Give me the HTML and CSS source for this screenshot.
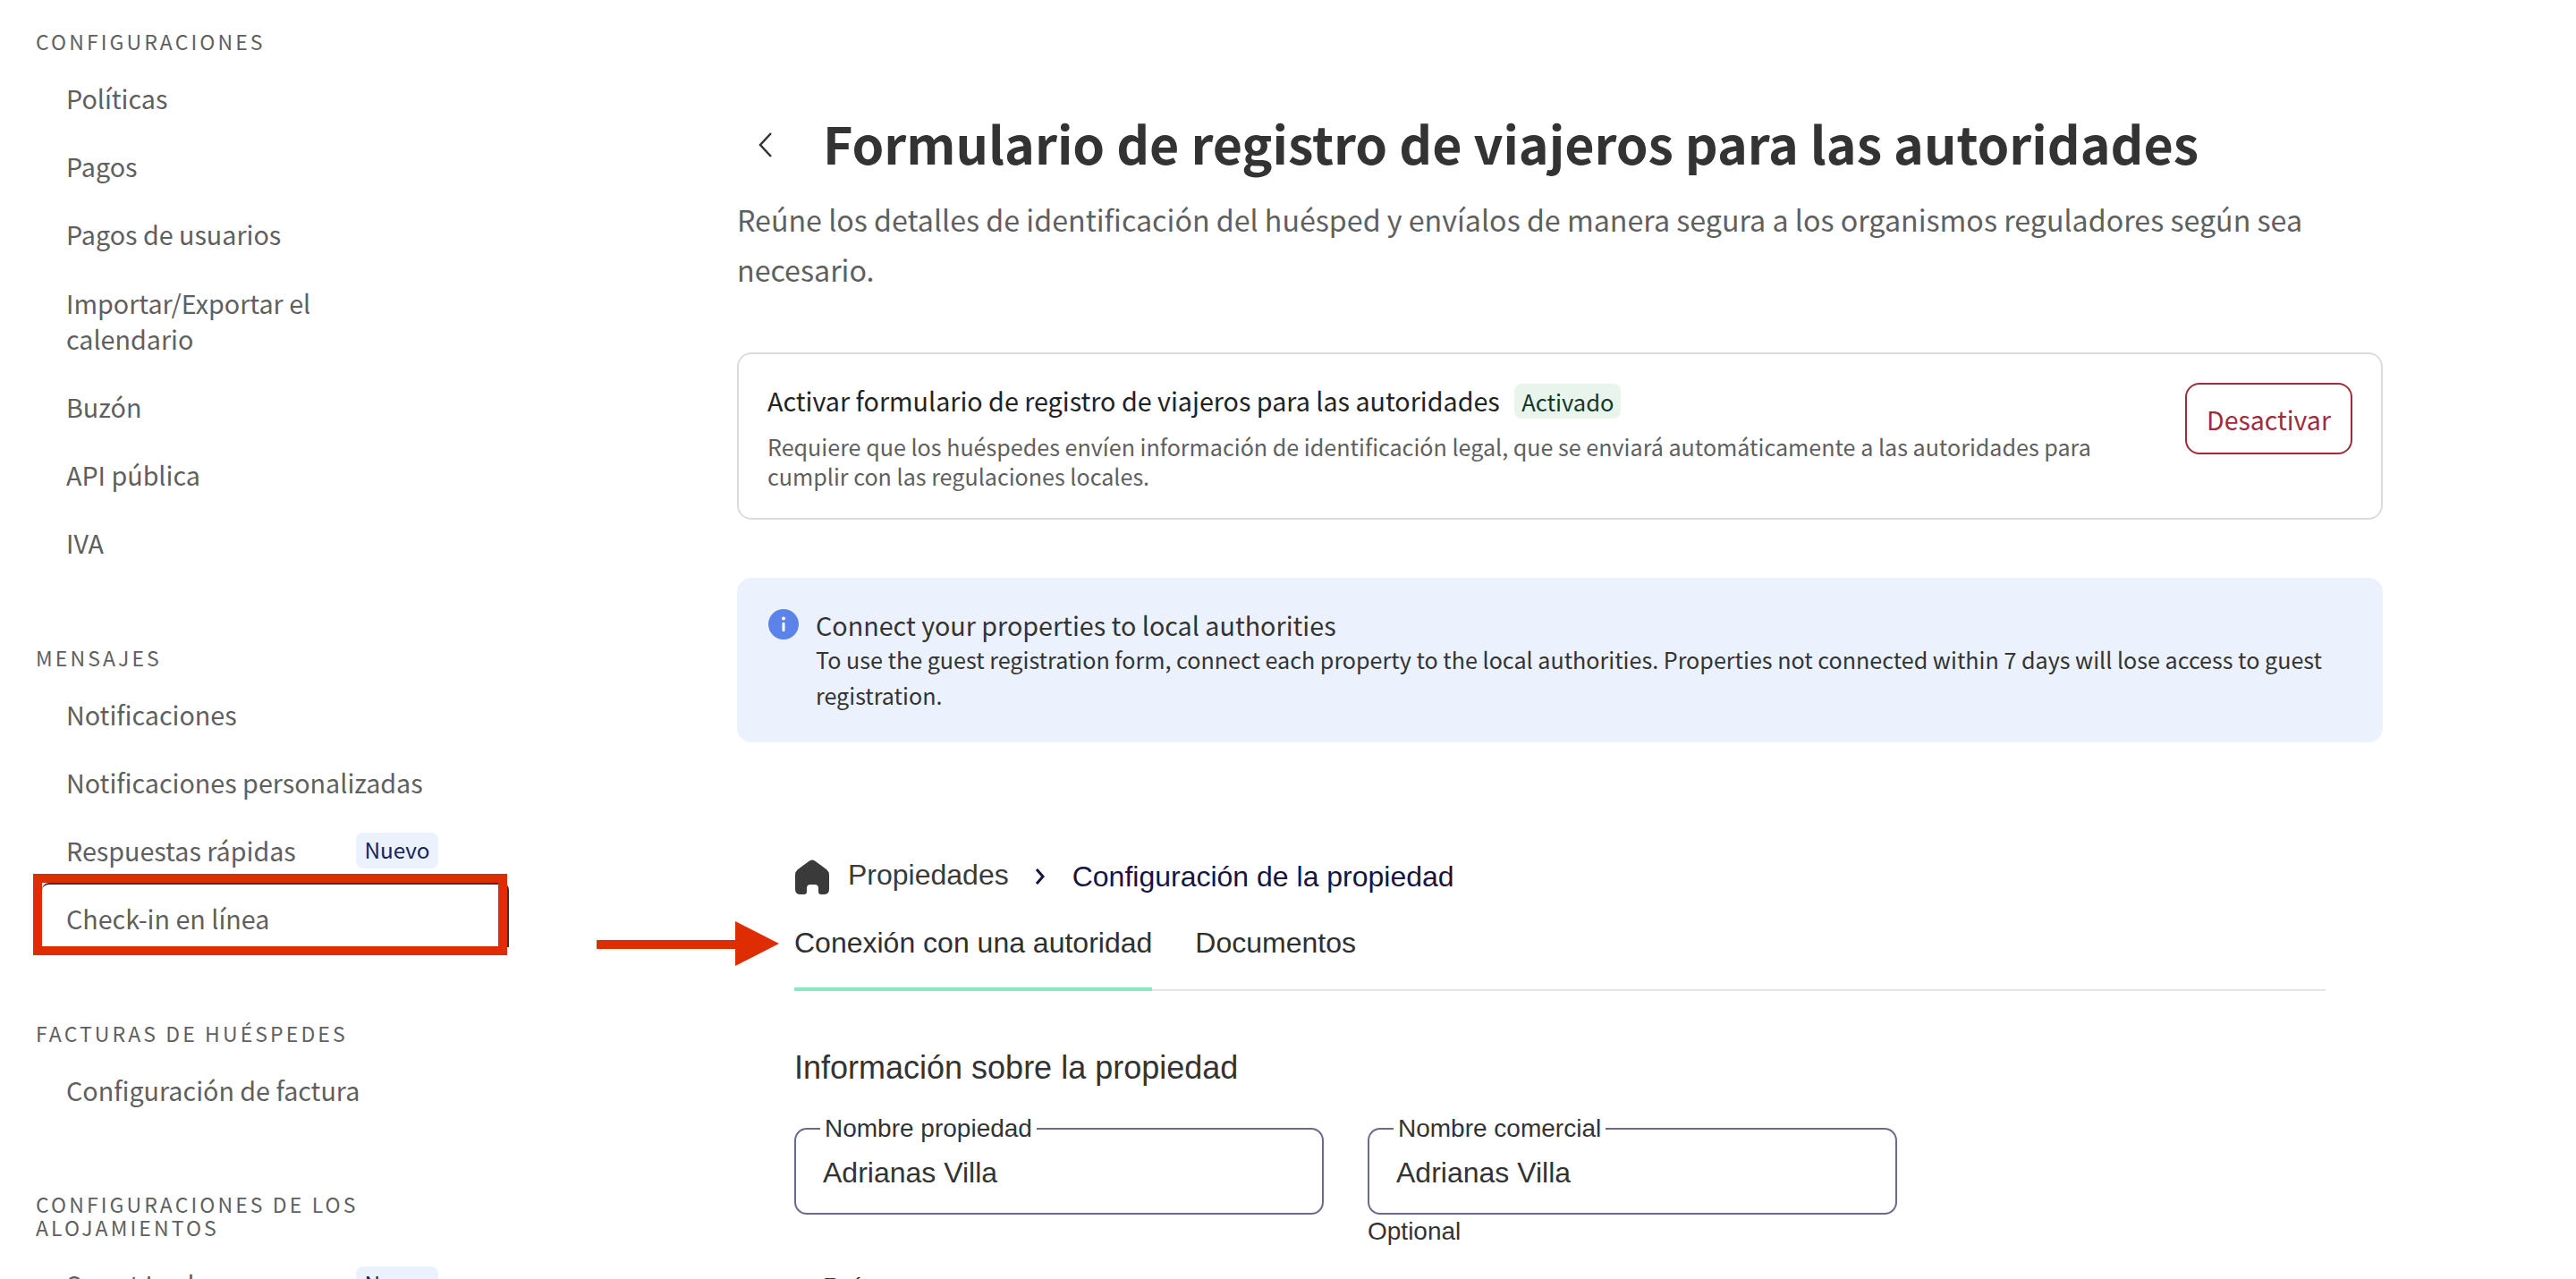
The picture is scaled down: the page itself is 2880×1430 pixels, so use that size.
FILE: index.html
```html
<!DOCTYPE html>
<html lang="es">

<head>
    <meta charset="UTF-8">
    <title>Formulario de registro de viajeros</title>
    <link rel="stylesheet" href="styles.css">
</head>

<body>
    <div class="page">
        <!-- sidebar -->
        <nav class="sidebar">
            <section class="nav-group first">
                <h3 class="nav-title">CONFIGURACIONES</h3>
                <a class="nav-item">Políticas</a>
                <a class="nav-item">Pagos</a>
                <a class="nav-item">Pagos de usuarios</a>
                <a class="nav-item">Importar/Exportar el calendario</a>
                <a class="nav-item">Buzón</a>
                <a class="nav-item">API pública</a>
                <a class="nav-item">IVA</a>
            </section>

            <section class="nav-group">
                <h3 class="nav-title">MENSAJES</h3>
                <a class="nav-item">Notificaciones</a>
                <a class="nav-item">Notificaciones personalizadas</a>
                <a class="nav-item"><span class="nav-name">Respuestas rápidas</span><span class="badge-new">Nuevo</span></a>
                <a class="nav-item highlighted">Check-in en línea</a>
            </section>

            <section class="nav-group">
                <h3 class="nav-title">FACTURAS DE HUÉSPEDES</h3>
                <a class="nav-item">Configuración de factura</a>
            </section>

            <section class="nav-group">
                <h3 class="nav-title">CONFIGURACIONES DE LOS ALOJAMIENTOS</h3>
                <a class="nav-item"><span class="nav-name">Smart Locks</span><span class="badge-new">Nuevo</span></a>
            </section>
        </nav>

        <!-- arrow between menu and panel -->
        <svg class="arrow" width="204" height="50" viewBox="0 0 204 50">
            <path d="M0 21H155V0L204 25L155 50V31H0Z" fill="#de2c03" />
        </svg>

        <main class="content">
            <header class="page-head">
                <svg class="back" width="20" height="30" viewBox="0 0 20 30">
                    <path d="M15 2L3 15L15 28" fill="none" stroke="#333" stroke-width="2.500" />
                </svg>
                <h1>Formulario de registro de viajeros para las autoridades</h1>
            </header>
            <p class="lead">Reúne los detalles de identificación del huésped y envíalos de manera segura a los organismos reguladores según sea necesario.</p>

            <div class="card">
                <div class="card-text">
                    <div class="card-title">Activar formulario de registro de viajeros para las autoridades <span class="badge-on">Activado</span></div>
                    <p>Requiere que los huéspedes envíen información de identificación legal, que se enviará automáticamente a las autoridades para cumplir con las regulaciones locales.</p>
                </div>
                <button class="btn-off">Desactivar</button>
            </div>

            <div class="notice">
                <svg class="info" width="34" height="34" viewBox="0 0 34 34">
                    <circle cx="17" cy="17" r="17" fill="#5b83ea" />
                    <rect x="15.500" y="15" width="3" height="10" rx="1" fill="#fff" />
                    <circle cx="17" cy="10.500" r="2" fill="#fff" />
                </svg>
                <div class="notice-text">
                    <div class="notice-title">Connect your properties to local authorities</div>
                    <p>To use the guest registration form, connect each property to the local authorities. Properties not connected within 7 days will lose access to guest registration.</p>
                </div>
            </div>

            <!-- embedded form -->
            <section class="embed">
                <div class="crumbs">
                    <svg class="home" width="38" height="39" viewBox="0 0 38 39">
                        <path d="M16 1.500Q19 -0.500 22 1.500L35 11Q38 13.500 38 17V33Q38 39 32 39H29Q26 39 26 36V32Q26 28 22 28H17Q13 28 13 32V36Q13 39 10 39H6Q0 39 0 33V17Q0 13.500 3 11Z" fill="#3a3a3a" />
                    </svg>
                    <span class="crumb-home">Propiedades</span>
                    <svg class="crumb-sep" width="14" height="20" viewBox="0 0 14 20">
                        <path d="M3 2L10 10L3 18" fill="none" stroke="#17153f" stroke-width="3" />
                    </svg>
                    <span class="crumb-now">Configuración de la propiedad</span>
                </div>

                <div class="tabs">
                    <a class="tab active">Conexión con una autoridad</a>
                    <a class="tab">Documentos</a>
                </div>

                <h2>Información sobre la propiedad</h2>

                <div class="fields">
                    <div class="field">
                        <fieldset>
                            <legend>Nombre propiedad</legend>
                            <span>Adrianas Villa</span>
                        </fieldset>
                    </div>
                    <div class="field">
                        <fieldset>
                            <legend>Nombre comercial</legend>
                            <span>Adrianas Villa</span>
                        </fieldset>
                        <small>Optional</small>
                    </div>
                </div>
                <div class="cut-label">País</div>
            </section>
        </main>
    </div>
</body>

</html>
```

FILE: styles.css
```css
*,
*::before,
*::after {
    box-sizing: border-box;
}

html,
body {
    margin: 0;
    padding: 0;
    height: 100%;
    overflow: hidden;
    background: #fff;
}

body {
    font-family: "Noto Sans CJK JP", "Noto Sans", sans-serif;
    color: #333;
}

.page {
    display: flex;
    height: 1430px;
    position: relative;
    overflow: hidden;
}

/* sidebar */
.sidebar {
    width: 824px;
    flex: none;
    padding: 33px 0 0 40px;
}

.nav-group {
    margin-top: 76.300px;
}

.nav-group.first {
    margin-top: 0;
}

.nav-title {
    width: 400px;
    margin: 0 0 13px;
    font-size: 23px;
    line-height: 26px;
    font-weight: 400;
    letter-spacing: 3.100px;
    color: #5f5f5f;
}

.nav-item {
    display: flex;
    align-items: center;
    width: 440px;
    padding: 18.100px 0 18.100px 34px;
    font-size: 28.700px;
    line-height: 40px;
    color: #5f5f5f;
}

.nav-name {
    width: 324px;
    flex: none;
}

.badge-new {
    flex: none;
    width: 92px;
    height: 40px;
    line-height: 38px;
    text-align: center;
    font-size: 24.300px;
    color: #17245e;
    background: #ebf2fe;
    border-radius: 8px;
}

/* red marker drawn over the menu item, with the dark edge of the shot under it */
.nav-item.highlighted {
    position: relative;
    z-index: 1;
}

.nav-item.highlighted::before {
    content: "";
    position: absolute;
    left: 7px;
    top: -2px;
    width: 522px;
    height: 72px;
    border-top: 2px solid #333;
    border-right: 2px solid #333;
    border-radius: 8px 8px 0 0;
}

.nav-item.highlighted::after {
    content: "";
    position: absolute;
    left: -3px;
    top: -12px;
    width: 530px;
    height: 91px;
    border: 10px solid #de2c03;
}

.arrow {
    position: absolute;
    left: 667px;
    top: 1030px;
}

/* main column */
.content {
    width: 1840px;
    flex: none;
    padding-top: 121px;
}

.page-head {
    display: flex;
    align-items: center;
    gap: 53px;
    padding-left: 23px;
}

.back {
    flex: none;
    margin-top: 3px;
}

h1 {
    margin: 0;
    font-size: 57.300px;
    line-height: 78px;
    font-weight: 700;
    color: #333;
}

.lead {
    margin: 18px 0 0;
    font-size: 32.200px;
    line-height: 56px;
    color: #5f5f5f;
}

.card {
    display: flex;
    align-items: flex-start;
    justify-content: space-between;
    margin-top: 65px;
    padding: 31px 32px 32px;
    border: 2px solid #dcdcdc;
    border-radius: 16px;
    height: 187px;
}

.card-text {
    width: 1500px;
}

.card-title {
    font-size: 28.700px;
    line-height: 42px;
    color: #222;
}

.card-text p {
    margin: 14px 0 0;
    font-size: 25.100px;
    line-height: 33px;
    color: #5f5f5f;
}

.badge-on {
    display: inline-block;
    margin-left: 10px;
    padding: 0 8px;
    font-size: 25.500px;
    line-height: 39px;
    color: #12372a;
    background: #e9f5ec;
    border-radius: 8px;
}

.btn-off {
    width: 187px;
    height: 80px;
    margin-top: 1px;
    font: inherit;
    font-size: 28.500px;
    color: #a32a38;
    background: #fff;
    border: 2px solid #a32a38;
    border-radius: 16px;
}

.notice {
    display: flex;
    gap: 19px;
    margin-top: 65px;
    padding: 35px;
    height: 184px;
    background: #ebf2fe;
    border-radius: 16px;
}

.info {
    flex: none;
}

.notice-title {
    font-size: 28.700px;
    line-height: 36px;
    color: #333;
}

.notice-text p {
    margin: 0;
    font-size: 25.100px;
    line-height: 40px;
    color: #333;
}

/* embedded form uses a different font */
.embed {
    margin: 130px 0 0 64px;
    width: 1712px;
    font-family: "Liberation Sans", Arial, sans-serif;
}

.crumbs {
    display: flex;
    align-items: center;
    height: 40px;
}

.home {
    flex: none;
    margin-left: 1px;
}

.crumb-home {
    margin: 0 0 4px 21px;
    font-size: 32px;
    color: #3a3a3a;
}

.crumb-sep {
    flex: none;
    margin: 0 29px 0 28px;
}

.crumb-now {
    font-size: 32px;
    color: #17153f;
}

.tabs {
    display: flex;
    gap: 48px;
    margin-top: 34px;
    height: 74px;
    border-bottom: 2px solid #e4e4ec;
}

.tab {
    height: 74px;
    font-size: 32px;
    line-height: 40px;
    color: #2f2f2f;
}

.tab.active {
    border-bottom: 4px solid #85e8c2;
}

h2 {
    margin: 64px 0 0;
    font-size: 36px;
    line-height: 44px;
    font-weight: 400;
    color: #333;
}

.fields {
    display: flex;
    gap: 49px;
    margin-top: 32px;
}

.field {
    width: 592px;
}

fieldset {
    margin: 0;
    padding: 0 16px 0 30px;
    height: 110px;
    border: 2px solid #6a6a90;
    border-radius: 14px;
}

legend {
    margin-left: -3px;
    padding: 0 5px;
    font-size: 28px;
    line-height: 28px;
    color: #333;
}

fieldset span {
    display: block;
    margin-top: 15px;
    font-size: 32px;
    line-height: 40px;
    color: #333;
}

.field small {
    display: block;
    margin-top: 3px;
    font-size: 28px;
    line-height: 32px;
    color: #333;
}

.cut-label {
    margin: 30px 0 0 32px;
    font-size: 28px;
    line-height: 32px;
    color: #333;
}
```
